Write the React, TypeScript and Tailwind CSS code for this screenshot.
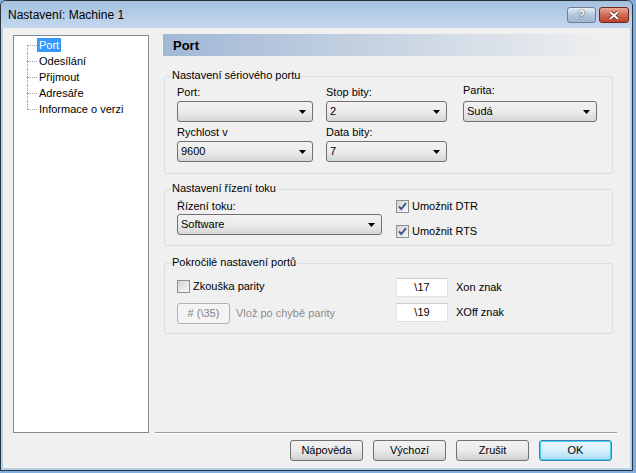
import type { ReactNode } from 'react';

// Dialog "Nastavení: Machine 1" – port settings page

const Arrow = () => (
  <svg width="7" height="4" viewBox="0 0 7 4" className="shrink-0">
    <path d="M0 0H7L3.5 4Z" fill="#000" />
  </svg>
);

const Combo = ({ value, className }: { value?: string; className: string }) => (
  <div
    className={`h-[21px] border border-[#707070] rounded-[3px] bg-gradient-to-b from-[#f2f2f2] via-[#ebebeb] to-[#d6d6d6] flex items-center justify-between pl-[3px] pr-[6px] ${className}`}
  >
    <span className="leading-[13px]">{value ?? ''}</span>
    <Arrow />
  </div>
);

const CheckBox = ({ checked, label }: { checked: boolean; label: string }) => (
  <div className="flex items-center h-[13px]">
    <div className="w-[13px] h-[13px] border border-[#8e8f8f] bg-gradient-to-br from-[#d4d4d4] to-[#f8f8f8] flex items-center justify-center">
      {checked && (
        <svg width="11" height="11" viewBox="0 0 11 11">
          <path d="M2 5.5L4.3 8L9 2.2" stroke="#3d5593" strokeWidth="1.9" fill="none" />
        </svg>
      )}
    </div>
    <span className="ml-[3px] leading-[13px]">{label}</span>
  </div>
);

const Group = ({ title, className, children }: { title: string; className: string; children: ReactNode }) => (
  <div className={`relative ml-[9px] w-[449px] border border-[#d5dfe5] rounded-[3px] ${className}`}>
    <span className="absolute -top-[8px] left-[6px] px-[1px] bg-[#f0f0f0] leading-[13px]">{title}</span>
    {children}
  </div>
);

const Button = ({ label, focused }: { label: string; focused?: boolean }) => (
  <div
    className={`w-[73px] h-[21px] rounded-[3px] border flex items-center justify-center leading-[13px] ${
      focused
        ? 'border-[#3c7fb1] bg-gradient-to-b from-[#eaf6fd] via-[#d9f0fc] to-[#a7d9f5] shadow-[inset_0_0_0_1px_#48d1f8]'
        : 'border-[#707070] bg-gradient-to-b from-[#f2f2f2] via-[#ebebeb] to-[#cfcfcf]'
    }`}
  >
    {label}
  </div>
);

const treeItems = ['Port', 'Odesílání', 'Přijmout', 'Adresáře', 'Informace o verzi'];

const App = () => {
  return (
    <div className="w-[636px] h-[473px] bg-[#7fb0e0] overflow-hidden font-['Liberation_Sans',Arial,sans-serif] text-[11px] text-black">
      <div className="w-[633px] h-[471px] border border-[#2a3340] rounded-t-[6px] bg-[#b6d0ea] flex flex-col">
        {/* title bar */}
        <div className="h-[27px] shrink-0 rounded-t-[5px] bg-gradient-to-b from-[#a6c1df] to-[#c3d8ee] flex items-center pl-[7px] pr-[3px]">
          <span className="text-[12px] leading-[14px] mt-[1px]">Nastavení: Machine 1</span>
          <div className="ml-auto flex items-center gap-[3px] mt-[1px]">
            <div className="w-[29px] h-[16px] rounded-[3px] border border-[#6e7f95] bg-gradient-to-b from-[#e6eef7] via-[#b5c6da] to-[#a2b7d0] flex items-center justify-center">
              <span className="text-white font-bold text-[12px] leading-[12px] [text-shadow:0_0_1px_#233,0_0_1px_#233]">?</span>
            </div>
            <div className="w-[30px] h-[16px] rounded-[3px] border border-[#6e2a1f] bg-gradient-to-b from-[#e9a897] via-[#cf6b55] to-[#bd4029] flex items-center justify-center">
              <svg width="12" height="9" viewBox="0 0 12 9">
                <path d="M2 1L10 8M10 1L2 8" stroke="#5a1a10" strokeWidth="3.4" />
                <path d="M2 1L10 8M10 1L2 8" stroke="#fff" strokeWidth="2" />
              </svg>
            </div>
          </div>
        </div>

        {/* client area */}
        <div className="flex-1 mx-[2px] mb-[2px] bg-[#f0f0f0] flex pl-[10px]">
          {/* tree */}
          <div className="mt-[7px] w-[136px] h-[398px] border border-[#828790] bg-white pt-[1px] pl-[13px]">
            {treeItems.map((item, i) => (
              <div key={item} className="flex h-[16px] items-center">
                <div className="relative w-[10px] h-full shrink-0">
                  <span className="absolute left-0 top-1/2 w-[10px] border-t border-dotted border-[#a0a0a0]" />
                  <span
                    className={`absolute left-0 border-l border-dotted border-[#a0a0a0] ${
                      i === 0 ? 'top-1/2 bottom-0' : i === treeItems.length - 1 ? 'top-0 h-1/2' : 'top-0 bottom-0'
                    }`}
                  />
                </div>
                <span className={`px-[2px] leading-[14px] ${i === 0 ? 'bg-[#3399ff] text-white' : ''}`}>{item}</span>
              </div>
            ))}
          </div>

          {/* right page */}
          <div className="ml-[6px] w-[462px] flex flex-col pt-[6px] pb-[7px]">
            <div className="ml-[8px] w-[449px] h-[22px] bg-gradient-to-r from-[#a1b8d5] to-[#f0f0f0] flex items-center pl-[10px]">
              <span className="font-bold text-[13px] leading-[15px]">Port</span>
            </div>

            <Group title="Nastavení sériového portu" className="mt-[20px] h-[98px]">
              <div className="flex pl-[12px] pt-[9px]">
                <div className="w-[136px] flex flex-col">
                  <span className="leading-[13px]">Port:</span>
                  <Combo className="mt-[2px]" />
                  <span className="leading-[13px] mt-[4px]">Rychlost v</span>
                  <Combo value="9600" className="mt-[2px]" />
                </div>
                <div className="ml-[13px] w-[121px] flex flex-col">
                  <span className="leading-[13px]">Stop bity:</span>
                  <Combo value="2" className="mt-[2px]" />
                  <span className="leading-[13px] mt-[4px]">Data bity:</span>
                  <Combo value="7" className="mt-[2px]" />
                </div>
                <div className="ml-[16px] w-[134px] flex flex-col -mt-[2px]">
                  <span className="leading-[13px]">Parita:</span>
                  <Combo value="Sudá" className="mt-[4px]" />
                </div>
              </div>
            </Group>

            <Group title="Nastavení řízení toku" className="mt-[15px] h-[57px]">
              <div className="flex pl-[12px] pt-[10px]">
                <div className="w-[205px] flex flex-col">
                  <span className="leading-[13px]">Řízení toku:</span>
                  <Combo value="Software" className="mt-[1px]" />
                </div>
                <div className="ml-[14px] flex flex-col gap-[12px]">
                  <CheckBox checked label="Umožnit DTR" />
                  <CheckBox checked label="Umožnit RTS" />
                </div>
              </div>
            </Group>

            <Group title="Pokročilé nastavení portů" className="mt-[17px] h-[71px]">
              <div className="flex pl-[12px]">
                <div className="w-[219px] flex flex-col pt-[16px]">
                  <CheckBox checked={false} label="Zkouška parity" />
                  <div className="flex items-center mt-[10px]">
                    <div className="w-[53px] h-[21px] rounded-[3px] border border-[#adb2b5] bg-[#f4f4f4] flex items-center justify-center text-[#838383] leading-[13px]">
                      # (\35)
                    </div>
                    <span className="ml-[6px] text-[#8d8d8d] leading-[13px]">Vlož po chybě parity</span>
                  </div>
                </div>
                <div className="flex flex-col pt-[14px] gap-[6px]">
                  <div className="flex items-center">
                    <div className="w-[52px] h-[19px] bg-white border border-[#dde1e7] border-t-[#c8ccd3] flex items-center justify-center leading-[13px]">
                      \17
                    </div>
                    <span className="ml-[8px] leading-[13px]">Xon znak</span>
                  </div>
                  <div className="flex items-center">
                    <div className="w-[52px] h-[19px] bg-white border border-[#dde1e7] border-t-[#c8ccd3] flex items-center justify-center leading-[13px]">
                      \19
                    </div>
                    <span className="ml-[8px] leading-[13px]">XOff znak</span>
                  </div>
                </div>
              </div>
            </Group>

            <div className="flex-1" />
            <div className="h-[2px] border-t border-[#a0a0a0] border-b border-b-white" />
            <div className="mt-[6px] flex justify-end gap-[10px] pr-[5px]">
              <Button label="Nápověda" />
              <Button label="Výchozí" />
              <Button label="Zrušit" />
              <Button label="OK" focused />
            </div>
          </div>
        </div>
      </div>
    </div>
  );
};

export default App;
